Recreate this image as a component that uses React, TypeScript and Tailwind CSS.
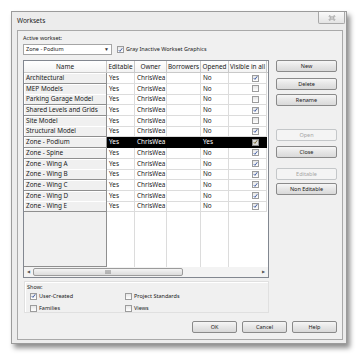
import React from 'react'

type Row = { name: string; visible: boolean; opened?: boolean; selected?: boolean }

const rows: Row[] = [
  { name: 'Architectural', visible: true },
  { name: 'MEP Models', visible: false },
  { name: 'Parking Garage Model', visible: false },
  { name: 'Shared Levels and Grids', visible: true },
  { name: 'Site Model', visible: false },
  { name: 'Structural Model', visible: true },
  { name: 'Zone - Podium', visible: true, opened: true, selected: true },
  { name: 'Zone - Spine', visible: true },
  { name: 'Zone - Wing A', visible: true },
  { name: 'Zone - Wing B', visible: true },
  { name: 'Zone - Wing C', visible: true },
  { name: 'Zone - Wing D', visible: true },
  { name: 'Zone - Wing E', visible: true },
]

const cols = 'grid grid-cols-[83px_28px_32px_34px_28px_38px]'

function Check({ checked, dark }: { checked: boolean; dark?: boolean }) {
  return (
    <span
      className={`inline-flex h-[7px] w-[7px] items-center justify-center border ${
        dark ? 'border-[#8a8a8a] bg-[#d8d8d8]' : 'border-[#9c9c9c] bg-[linear-gradient(#e6e6e6,#ffffff)]'
      }`}
    >
      {checked && (
        <svg viewBox="0 0 8 8" className="h-[6px] w-[6px]">
          <path d="M1.2 4.2 L3.1 6.2 L6.8 1.2" fill="none" stroke={dark ? '#6b5a1e' : '#2a4a9a'} strokeWidth="1.4" />
        </svg>
      )}
    </span>
  )
}

function Btn({ label, disabled, className = '' }: { label: string; disabled?: boolean; className?: string }) {
  return (
    <div
      className={`flex h-[12px] items-center justify-center rounded-[2px] border text-[5.5px] ${
        disabled
          ? 'border-[#c4c7c9] bg-[#f4f4f4] text-[#a6a6a6]'
          : 'border-[#8a8a8a] bg-[linear-gradient(#f6f6f6,#e6e6e6_50%,#d9d9d9)] text-[#222]'
      } ${className}`}
    >
      {label}
    </div>
  )
}

export default function App() {
  return (
    <div className="h-[357px] w-[360px] overflow-hidden bg-white pl-[11px] pt-[11px] font-['Noto_Sans',sans-serif] text-[#1a1a1a]">
      <div className="flex h-[333px] w-[336px] flex-col border border-[#9b9b9b] bg-[#ececec] shadow-[3px_4px_5px_rgba(0,0,0,0.45)]">
        {/* title bar */}
        <div className="flex h-[18px] items-start justify-between pl-[5px] pr-[1px]">
          <span className="pt-[5px] text-[6.5px] leading-[8px] text-[#222]">Worksets</span>
          <div className="flex h-[12px] w-[27px] items-center justify-center rounded-b-[2px] border border-t-0 border-[#a8a8a8] bg-[linear-gradient(#fafafa,#e4e4e4)]">
            <svg viewBox="0 0 10 8" className="h-[6px] w-[8px]">
              <path d="M1 1 L9 7 M9 1 L1 7" stroke="#9a9a9a" strokeWidth="2.2" />
              <path d="M1 1 L9 7 M9 1 L1 7" stroke="#f4f4f4" strokeWidth="0.8" />
            </svg>
          </div>
        </div>

        {/* client area */}
        <div className="mb-[3px] ml-[5px] mr-[3px] flex flex-1 flex-col border border-[#a9a9a9] bg-[#f0f0f0] pl-[5px] pr-[5px]">
          <div className="pt-[3px] text-[5.5px] leading-[9px]">Active workset:</div>
          <div className="mt-[1px] flex h-[11px] items-center">
            <div className="flex h-[11px] w-[89px] items-center justify-between border border-[#a5a5a5] bg-white pl-[2px] pr-[2px] text-[5.5px]">
              <span>Zone - Podium</span>
              <span className="text-[5px] text-[#333]">▼</span>
            </div>
            <div className="ml-[5px] flex items-center gap-[2px] text-[5.5px]">
              <Check checked />
              <span>Gray Inactive Workset Graphics</span>
            </div>
          </div>

          <div className="mt-[5px] flex">
            {/* table */}
            <div className="flex h-[218px] w-[246px] flex-col border border-[#828790] bg-white text-[6.4px] leading-[10px]">
              <div className={`${cols} h-[12px] border-b border-[#c9c9c9]`}>
                {['Name', 'Editable', 'Owner', 'Borrowers', 'Opened', 'Visible in all'].map((h) => (
                  <div key={h} className="flex items-center justify-center border-r border-[#c9c9c9] bg-[linear-gradient(#ffffff,#f3f3f3)]">
                    {h}
                  </div>
                ))}
              </div>
              {rows.map((r) => (
                <div key={r.name} className={`${cols} h-[10.7px]`}>
                  <div className="flex items-center border-b border-r border-[#8f8f8f] bg-[#f0f0f0] pl-[2px] shadow-[inset_1px_1px_0_#ffffff]">
                    {r.name}
                  </div>
                  {['Yes', 'ChrisWea', '', r.opened ? 'Yes' : 'No'].map((v, i) => (
                    <div
                      key={i}
                      className={`flex items-center border-b border-r pl-[2px] ${
                        r.selected ? 'border-black bg-black text-white' : 'border-[#dcdcdc]'
                      }`}
                    >
                      {v}
                    </div>
                  ))}
                  <div
                    className={`flex items-center justify-end border-b border-r pr-[7px] ${
                      r.selected ? 'border-black bg-black' : 'border-[#dcdcdc]'
                    }`}
                  >
                    <Check checked={r.visible} dark={r.selected} />
                  </div>
                </div>
              ))}
              <div className={`${cols} flex-1`}>
                <div className="border-b border-r border-[#8f8f8f] bg-[#f0f0f0]" />
                <div className="border-r border-[#dcdcdc]" />
                <div className="border-r border-[#dcdcdc]" />
                <div className="border-r border-[#dcdcdc]" />
                <div className="border-r border-[#dcdcdc]" />
                <div />
              </div>
              {/* horizontal scrollbar */}
              <div className="flex h-[10px] items-center bg-[#f3f3f3]">
                <span className="flex w-[9px] justify-center text-[4px] text-[#555]">◀</span>
                <div className="flex h-[8px] w-[150px] items-center justify-center rounded-[2px] border border-[#9b9b9b] bg-[linear-gradient(#f4f4f4,#dcdcdc)]">
                  <svg viewBox="0 0 6 4" className="h-[4px] w-[6px]">
                    <path d="M1 0 V4 M3 0 V4 M5 0 V4" stroke="#6a6a6a" strokeWidth="0.8" />
                  </svg>
                </div>
                <div className="flex-1" />
                <span className="flex w-[9px] justify-center text-[4px] text-[#555]">▶</span>
              </div>
            </div>

            {/* right buttons */}
            <div className="ml-[7px] flex w-[61px] flex-col">
              <Btn label="New" />
              <Btn label="Delete" className="mt-[6px]" />
              <Btn label="Rename" className="mt-[4px]" />
              <Btn label="Open" disabled className="mt-[23px]" />
              <Btn label="Close" className="mt-[5px]" />
              <Btn label="Editable" disabled className="mt-[10px]" />
              <Btn label="Non Editable" className="mt-[3px]" />
            </div>
          </div>

          {/* show group */}
          <div className="ml-[1px] mt-[3px] flex h-[32px] w-[245px] flex-col border border-[#e0e0e0] text-[5.5px] shadow-[inset_1px_1px_0_#ffffff]">
            <div className="pl-[2px] pt-[1px] leading-[8px]">Show:</div>
            <div className="mt-[1px] grid grid-cols-[95px_1fr] gap-y-[4px] pl-[5px]">
              <div className="flex items-center gap-[2px]">
                <Check checked />
                <span>User-Created</span>
              </div>
              <div className="flex items-center gap-[2px]">
                <Check checked={false} />
                <span>Project Standards</span>
              </div>
              <div className="flex items-center gap-[2px]">
                <Check checked={false} />
                <span>Families</span>
              </div>
              <div className="flex items-center gap-[2px]">
                <Check checked={false} />
                <span>Views</span>
              </div>
            </div>
          </div>

          {/* bottom buttons */}
          <div className="mt-[8px] flex justify-end gap-[5px]">
            <Btn label="OK" className="w-[45px]" />
            <Btn label="Cancel" className="w-[45px]" />
            <Btn label="Help" className="w-[45px]" />
          </div>
        </div>
      </div>
    </div>
  )
}
